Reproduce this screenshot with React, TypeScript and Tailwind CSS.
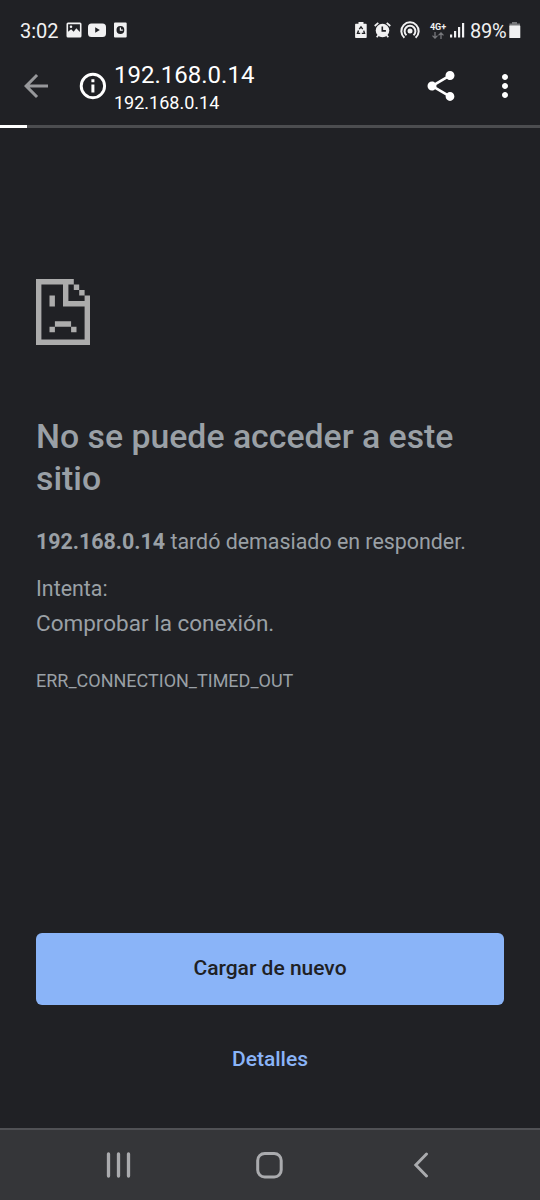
import { MdArrowBack, MdMoreVert, MdShare } from "react-icons/md";

function StatusBar() {
  return (
    <div className="flex h-[60px] items-center pr-[19px] pl-[20px] text-[20px] text-[#f1f1f2]">
      <span className="w-[46px] pt-[2px]">3:02</span>
      <svg className="h-4 w-[61px]" viewBox="0 0 61 16" fill="currentColor">
        <path
          fillRule="evenodd"
          d="M2 .5h12A1.500 1.500 0 0 1 15.500 2v12a1.500 1.500 0 0 1-1.500 1.500h-12A1.500 1.500 0 0 1 .5 14V2A1.500 1.500 0 0 1 2 .5ZM2.100 2.300v7.400l3-2.500 2.600 2.500 2.600-3.400 3.600 3.600V2.300ZM5 3.500a1.300 1.300 0 1 0 0 2.600 1.300 1.300 0 0 0 0-2.600Z"
        />
        <path
          fillRule="evenodd"
          d="M25.500 1.500h11a3.500 3.500 0 0 1 3.500 3.500v6.500a3.500 3.500 0 0 1-3.500 3.500h-11a3.500 3.500 0 0 1-3.500-3.500v-6.500a3.500 3.500 0 0 1 3.500-3.500ZM29.200 5.300v5.400l4.600-2.700Z"
        />
        <path
          fillRule="evenodd"
          d="M49 .5h10.700a1 1 0 0 1 1 1v13.100a1 1 0 0 1-1 1h-10.700a1 1 0 0 1-1-1v-13.100a1 1 0 0 1 1-1ZM54.400 4.100a3.900 3.900 0 1 0 0 7.800 3.900 3.900 0 0 0 0-7.800Z"
        />
        <path d="M54.400 5.500v2.700h2.400" fill="none" stroke="currentColor" strokeWidth="1.200" />
      </svg>

      <div className="ml-auto flex items-center">
        {/* battery saver */}
        <svg className="h-4 w-[12px]" viewBox="0 0 12 16" fill="currentColor">
          <path d="M3.500 0h5v1.800h2.500a.7.7 0 0 1 .7.7v12.700a.8.8 0 0 1-.8.800h-10a.8.8 0 0 1-.8-.800v-12.700a.7.7 0 0 1 .7-.700h2.700Z" />
          <path
            d="M4.300 7.200 6 4.900l1.700 2.300M8.700 8.600l.8 2.800h-2.700M5.200 11.400h-2.700l1-2.900"
            fill="none"
            stroke="#202125"
            strokeWidth="1.400"
          />
        </svg>
        {/* alarm */}
        <svg className="ml-[7px] h-4 w-[17px]" viewBox="0 0 17 16" fill="currentColor">
          <circle cx="8.500" cy="8.500" r="6.800" />
          <path d="M8.300 4.600v4.300h3.600" fill="none" stroke="#202125" strokeWidth="1.600" />
          <path
            d="M.7 4 4.300.9M16.300 4 12.700.9M4.300 13.200l-1.600 2M12.700 13.200l1.600 2"
            stroke="currentColor"
            strokeWidth="1.700"
          />
        </svg>
        {/* hotspot */}
        <svg className="mb-px ml-[9px] h-[18px] w-[20px]" viewBox="0 0 20 18" fill="none" stroke="currentColor">
          <circle cx="10" cy="10" r="2.500" fill="currentColor" stroke="none" />
          <path d="M6.500 14.300a5.400 5.400 0 1 1 7 0M4.400 16.700a8.700 8.700 0 1 1 11.200 0" strokeWidth="2" />
        </svg>
        {/* network type */}
        <div className="ml-[10px] flex h-[18px] w-[16px] flex-col items-center pt-[2px]">
          <span className="text-[9px] leading-[8px] font-bold">4G+</span>
          <svg className="mt-px h-[7px] w-[12px]" viewBox="0 0 12 7" fill="none" stroke="#77787c" strokeWidth="1.300">
            <path d="M3 0v6M.5 3.600 3 6.100l2.500-2.500M9 7V1M6.500 3.400 9 .9l2.500 2.500" />
          </svg>
        </div>
        <svg className="ml-[4px] h-4 w-[15px]" viewBox="0 0 15 16" fill="currentColor">
          <rect x="0" y="12.500" width="2.200" height="3" />
          <rect x="4" y="9" width="2.200" height="6.500" />
          <rect x="8" y="5" width="2.200" height="10.500" />
          <rect x="12" y="1" width="2.200" height="14.500" />
        </svg>
        <span className="ml-[5px] w-[39px] pt-[2px] tracking-[-0.3px]">89%</span>
        <svg className="h-4 w-[12px]" viewBox="0 0 12 16">
          <path d="M3 0h5v1.500h3V4.500H.500V1.500H3Z" fill="#77787b" />
          <rect x=".3" y="3.500" width="11" height="12.500" rx=".6" fill="#f1f1f2" />
        </svg>
      </div>
    </div>
  );
}

function Toolbar() {
  return (
    <header className="flex h-[65px] items-start text-white">
      <button aria-label="Atrás" className="mt-[8px] ml-[18px]">
        <MdArrowBack className="size-[36px] text-[#97989b]" />
      </button>
      <svg className="mt-[10px] ml-[23px] size-[32px]" viewBox="0 0 32 32" fill="currentColor">
        <circle cx="15.900" cy="16" r="11.700" fill="none" stroke="currentColor" strokeWidth="2.900" />
        <path d="M14.400 9.300h3v3h-3ZM14.400 14.500h3v8h-3Z" />
      </svg>
      <div className="ml-[5px] pt-px">
        <div className="text-[24px] leading-[28px]">192.168.0.14</div>
        <div className="text-[18px] leading-[28px]">192.168.0.14</div>
      </div>
      <button aria-label="Compartir" className="mt-[8px] ml-auto">
        <MdShare className="size-[36px]" />
      </button>
      <button aria-label="Más opciones" className="mt-[8px] mr-[17px] ml-[28px]">
        <MdMoreVert className="size-[36px]" />
      </button>
    </header>
  );
}

function SadPage() {
  return (
    <svg className="h-[66px] w-[54px]" viewBox="0 0 10 12" preserveAspectRatio="none" fill="#acacac">
      <path d="M0 0h7v1h1v1h1v1h1v9H0ZM1 1v10h8V5H5V1ZM6 1v3h3V3H8V2H7V1Z" fillRule="evenodd" />
      <path d="M2.500 3h1v2h-1ZM3.500 7.700h3v1h-3ZM2.500 8.700h1v1h-1ZM6.500 8.700h1v1h-1Z" />
    </svg>
  );
}

function NavigationBar() {
  return (
    <nav className="flex h-[72px] items-start border-t-2 border-[#505155] bg-[#353639] text-[#aaabae]">
      <svg className="mt-[22px] ml-[106px] h-[26px] w-[26px]" viewBox="0 0 26 26" stroke="currentColor" strokeWidth="3.300" strokeLinecap="round">
        <path d="M2.500 2v22M12.500 2v22M22.500 2v22" />
      </svg>
      <svg className="mt-[21px] ml-[123px] h-[28px] w-[28px]" viewBox="0 0 28 28" fill="none" stroke="currentColor" strokeWidth="3">
        <rect x="2.700" y="2.500" width="23.500" height="23.500" rx="7" />
      </svg>
      <svg className="mt-[22px] ml-[130px] h-[26px] w-[16px]" viewBox="0 0 16 26" fill="none" stroke="currentColor" strokeWidth="2.900" strokeLinecap="round">
        <path d="M13.500 2 2.800 13l10.700 11" />
      </svg>
    </nav>
  );
}

export default function App() {
  return (
    <div className="flex h-[1200px] w-[540px] flex-col overflow-hidden bg-[#202125] font-['Roboto',sans-serif]">
      <StatusBar />
      <Toolbar />
      <div className="h-[3px] bg-[#4c4d50]">
        <div className="h-full w-[27px] bg-white" />
      </div>

      <main className="flex flex-1 flex-col px-[36px] pt-[151px] pb-[44px] text-[21.4px] text-[#9aa0a6]">
        <SadPage />
        <h1 className="mt-[71px] text-[33.8px] leading-[42px] font-medium">No se puede acceder a este sitio</h1>
        <p className="mt-[25px] leading-[34px]">
          <strong className="font-bold">192.168.0.14</strong> tardó demasiado en responder.
        </p>
        <p className="mt-[13px] leading-[34px]">Intenta:</p>
        <p className="text-[22.5px] leading-[34px]">Comprobar la conexión.</p>
        <p className="mt-[29px] text-[18px] leading-[24px]">ERR_CONNECTION_TIMED_OUT</p>

        <div className="mt-auto flex flex-col">
          <button className="h-[72px] rounded-[6px] bg-[#8ab4f8] text-[21px] font-medium text-[#202124]">
            Cargar de nuevo
          </button>
          <button className="mt-[31px] h-[48px] text-[21px] font-medium text-[#8ab4f8]">Detalles</button>
        </div>
      </main>
      <NavigationBar />
    </div>
  );
}
